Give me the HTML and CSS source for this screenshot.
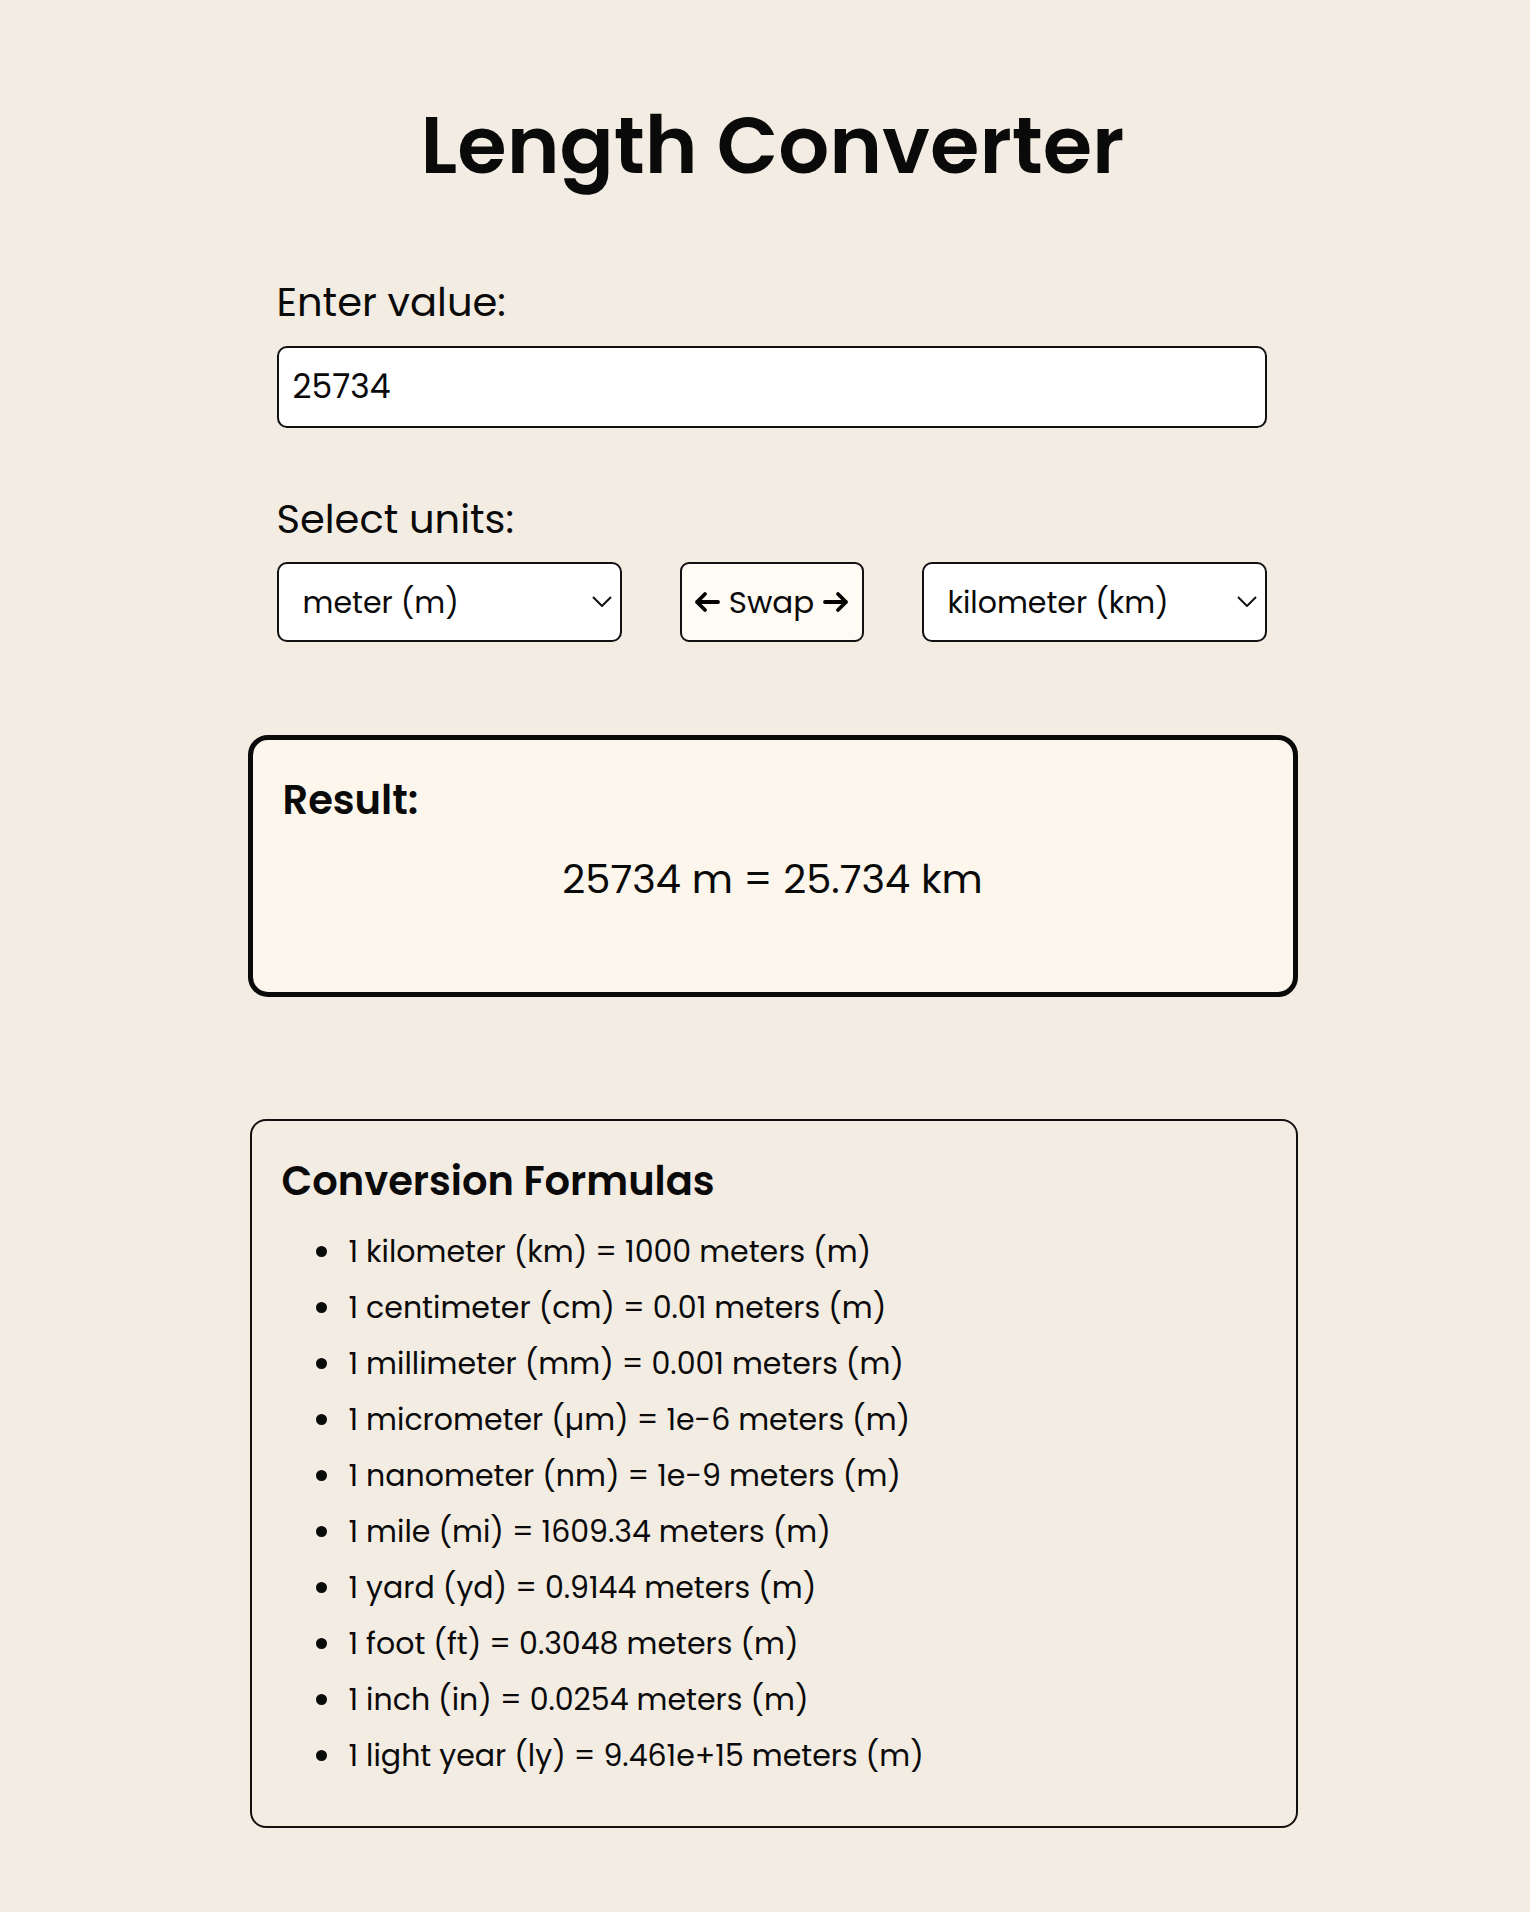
FILE: index.html
```html
<!DOCTYPE html>
<html lang="en">
<head>
<meta charset="utf-8">
<title>Length Converter</title>
<link rel="stylesheet" href="styles.css">
</head>
<body>
<main class="app">
  <h1 class="title">Length Converter</h1>

  <section class="form">
    <label class="field-label" for="value">Enter value:</label>
    <input class="value-input" id="value" type="text" value="25734">

    <div class="field-label units-label">Select units:</div>
    <div class="units-row">
      <div class="select-wrap">
        <select class="unit-select">
          <option selected>meter (m)</option>
          <option>kilometer (km)</option>
          <option>centimeter (cm)</option>
        </select>
        <svg class="chevron" viewBox="0 0 20 11" width="20" height="11"><path d="M1 1 L10 10 L19 1" fill="none" stroke="#111" stroke-width="2"/></svg>
      </div>
      <button class="swap-btn" type="button">
        <svg class="arrow" viewBox="0 0 26 22" width="26" height="22"><path d="M24 11 H3 M11 3 L3 11 L11 19" fill="none" stroke="#000" stroke-width="3.8" stroke-linecap="round" stroke-linejoin="round"/></svg>
        <span>Swap</span>
        <svg class="arrow" viewBox="0 0 26 22" width="26" height="22"><path d="M2 11 H23 M15 3 L23 11 L15 19" fill="none" stroke="#000" stroke-width="3.8" stroke-linecap="round" stroke-linejoin="round"/></svg>
      </button>
      <div class="select-wrap">
        <select class="unit-select">
          <option>meter (m)</option>
          <option selected>kilometer (km)</option>
          <option>centimeter (cm)</option>
        </select>
        <svg class="chevron" viewBox="0 0 20 11" width="20" height="11"><path d="M1 1 L10 10 L19 1" fill="none" stroke="#111" stroke-width="2"/></svg>
      </div>
    </div>
  </section>

  <section class="result-box">
    <h3 class="box-heading">Result:</h3>
    <p class="result-text">25734 m = 25.734 km</p>
  </section>

  <section class="formulas-box">
    <h3 class="box-heading">Conversion Formulas</h3>
    <ul class="formula-list">
      <li>1 kilometer (km) = 1000 meters (m)</li>
      <li>1 centimeter (cm) = 0.01 meters (m)</li>
      <li>1 millimeter (mm) = 0.001 meters (m)</li>
      <li>1 micrometer (µm) = 1e-6 meters (m)</li>
      <li>1 nanometer (nm) = 1e-9 meters (m)</li>
      <li>1 mile (mi) = 1609.34 meters (m)</li>
      <li>1 yard (yd) = 0.9144 meters (m)</li>
      <li>1 foot (ft) = 0.3048 meters (m)</li>
      <li>1 inch (in) = 0.0254 meters (m)</li>
      <li>1 light year (ly) = 9.461e+15 meters (m)</li>
    </ul>
  </section>
</main>
</body>
</html>
```

FILE: styles.css
```css
* { box-sizing: border-box; }

html, body {
  background: #f3ece2;
}

body {
  margin: 0;
  padding: 0 0 86px 15px;
  font-family: "Poppins", "Inter", "Noto Sans", sans-serif;
  color: #0a0a0a;
}

.app {
  width: 1050px;
  margin: 0 auto;
}

.title {
  margin: 97px 0 0;
  font-size: 80px;
  line-height: 96px;
  font-weight: 600;
  text-align: center;
}

.form {
  padding: 0 31px 0 29px;
  display: flex;
  flex-direction: column;
}

.field-label {
  display: block;
  font-size: 40px;
  line-height: 46px;
  font-weight: 400;
  margin-top: 86px;
  margin-bottom: 21px;
}

.units-label {
  margin-top: 68px;
  margin-bottom: 20px;
}

.value-input {
  display: block;
  width: 100%;
  height: 82px;
  border: 2px solid #111;
  border-radius: 10px;
  background: #fff;
  padding: 0 14px;
  font-family: inherit;
  font-size: 33px;
  color: #0a0a0a;
  outline: none;
}

.units-row {
  display: flex;
  justify-content: space-between;
  align-items: stretch;
  height: 80px;
}

.select-wrap {
  position: relative;
  width: 345px;
}

.unit-select {
  appearance: none;
  -webkit-appearance: none;
  width: 100%;
  height: 100%;
  border: 2px solid #111;
  border-radius: 10px;
  background: #fff;
  padding: 0 40px 0 24px;
  font-family: inherit;
  font-size: 30px;
  color: #0a0a0a;
  outline: none;
}

.chevron {
  position: absolute;
  right: 10px;
  top: 34px;
  pointer-events: none;
}

.swap-btn {
  width: 184px;
  border: 2px solid #111;
  border-radius: 9px;
  background: #fefaf4;
  display: flex;
  align-items: center;
  justify-content: center;
  gap: 9px;
  padding: 0;
  font-family: inherit;
  font-size: 31px;
  color: #0a0a0a;
}

.swap-btn .arrow {
  flex: none;
}

.result-box {
  margin-top: 93px;
  height: 262px;
  border: 5px solid #0a0a0a;
  border-radius: 20px;
  background: #fdf6ec;
  padding: 37px 30px 0;
}

.box-heading {
  margin: 0;
  font-size: 40px;
  line-height: 46px;
  font-weight: 600;
}

.result-text {
  margin: 33px 0 0;
  text-align: center;
  font-size: 40px;
  line-height: 46px;
}

.formulas-box {
  margin: 122px 0 0 2px;
  border: 2px solid #111;
  border-radius: 16px;
  padding: 37px 30px 42px;
}

.formula-list {
  margin: 20px 0 0;
  padding-left: 62px;
  font-size: 30px;
  line-height: 56px;
}

.formula-list li {
  padding-left: 5px;
}
```
